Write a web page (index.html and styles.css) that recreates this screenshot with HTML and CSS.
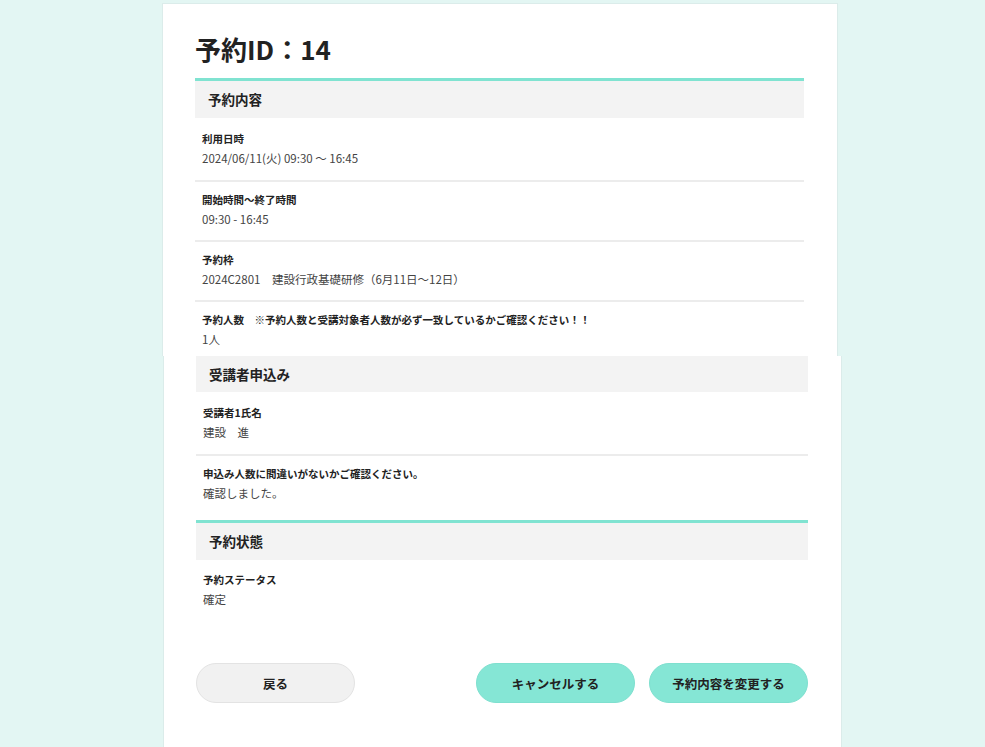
FILE: index.html
```html
<!DOCTYPE html>
<html lang="ja">
<head>
<meta charset="utf-8">
<title>予約ID：14</title>
<link rel="stylesheet" href="styles.css">
</head>
<body>
<main class="page">
  <div class="card card-top">
    <h1 class="title">予約ID：14</h1>
    <section class="section">
      <h2 class="section-head">予約内容</h2>
      <div class="row row-first">
        <div class="label">利用日時</div>
        <div class="value">2024/06/11(火) 09:30 ～ 16:45</div>
      </div>
      <div class="row">
        <div class="label">開始時間～終了時間</div>
        <div class="value">09:30 - 16:45</div>
      </div>
      <div class="row">
        <div class="label">予約枠</div>
        <div class="value">2024C2801　建設行政基礎研修（6月11日～12日）</div>
      </div>
      <div class="row row-last">
        <div class="label">予約人数　※予約人数と受講対象者人数が必ず一致しているかご確認ください！！</div>
        <div class="value">1人</div>
      </div>
    </section>
  </div>
  <div class="card card-bottom">
    <section class="section">
      <h2 class="section-head section-head-plain">受講者申込み</h2>
      <div class="row row-first">
        <div class="label">受講者1氏名</div>
        <div class="value">建設　進</div>
      </div>
      <div class="row row-last">
        <div class="label">申込み人数に間違いがないかご確認ください。</div>
        <div class="value">確認しました。</div>
      </div>
    </section>
    <section class="section section-gap">
      <h2 class="section-head">予約状態</h2>
      <div class="row row-single">
        <div class="label">予約ステータス</div>
        <div class="value">確定</div>
      </div>
    </section>
    <div class="actions">
      <button class="btn btn-back" type="button">戻る</button>
      <div class="actions-right">
        <button class="btn btn-primary" type="button">キャンセルする</button>
        <button class="btn btn-primary" type="button">予約内容を変更する</button>
      </div>
    </div>
  </div>
</main>
</body>
</html>
```

FILE: styles.css
```css
* { box-sizing: content-box; }
html, body {
  margin: 0;
  padding: 0;
  background: #e3f6f3;
  font-family: "Noto Sans CJK JP", "Noto Sans", sans-serif;
  color: #222;
  overflow: hidden;
}
.page {
  display: flex;
  flex-direction: column;
  align-items: flex-start;
  padding-top: 3px;
}
.card {
  background: #fff;
  border-left: 1px solid #dbecea;
  border-right: 1px solid #dbecea;
}
.card-top {
  margin-left: 162px;
  width: 609px;
  padding: 27px 33px 0 32px;
  border-top: 1px solid #dbecea;
  height: 325px;
  overflow: hidden;
}
.card-bottom {
  margin-left: 163px;
  width: 612px;
  padding: 0 33px 60px 32px;
}
.title {
  margin: 0 0 11px;
  font-size: 26px;
  line-height: 36px;
  font-weight: 700;
  color: #222;
}
.section { margin: 0; }
.section-gap { margin-top: 6px; }
.section-head {
  margin: 0;
  background: #f3f3f3;
  border-top: 3px solid #80e3d1;
  height: 37px;
  line-height: 37px;
  padding-left: 13px;
  font-size: 13.5px;
  font-weight: 700;
  color: #222;
}
.section-head-plain {
  border-top: 0;
  height: 36px;
  line-height: 36px;
}
.row {
  padding: 10px 7px 10px;
  border-bottom: 2px solid #ececec;
}
.row-first {
  padding-top: 13px;
  padding-bottom: 11px;
}
.row-last { border-bottom: 0; }
.row-single {
  border-bottom: 0;
  padding-top: 12px;
  padding-bottom: 10px;
}
.label {
  font-size: 10.5px;
  line-height: 16px;
  font-weight: 700;
  color: #222;
}
.value {
  font-size: 11.5px;
  line-height: 22px;
  color: #444;
}
.actions {
  display: flex;
  justify-content: space-between;
  align-items: center;
  margin-top: 43px;
}
.actions-right {
  display: flex;
  gap: 14px;
}
.btn {
  width: 157px;
  height: 38px;
  border-radius: 20px;
  font-family: "Noto Sans CJK JP", "Noto Sans", sans-serif;
  font-size: 12.5px;
  font-weight: 700;
  color: #222;
  padding: 0;
  cursor: pointer;
}
.btn-back {
  background: #f1f1f1;
  border: 1px solid #e3e3e3;
}
.btn-primary {
  background: #85e6d5;
  border: 1px solid #7fe0cf;
}
```
